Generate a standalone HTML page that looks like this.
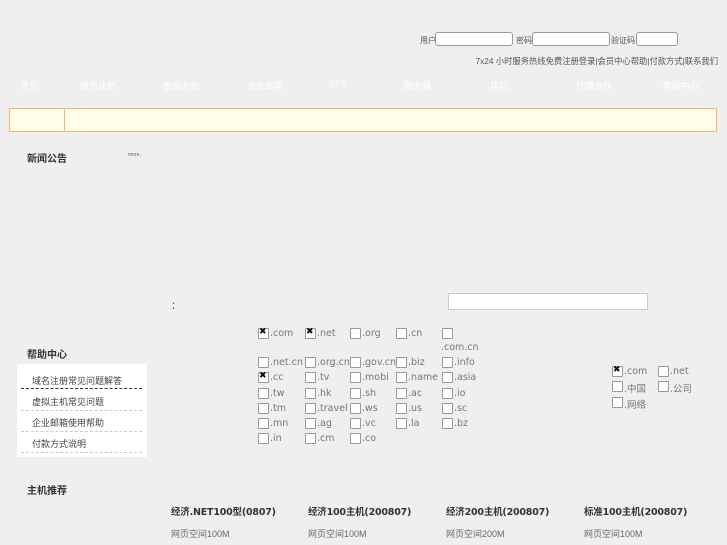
<!DOCTYPE html><html><head><meta charset="utf-8"><style>
body{margin:0;width:727px;height:545px;background:#efefef;font-family:"Liberation Sans","DejaVu Sans","Noto Sans CJK SC",sans-serif;position:relative;overflow:hidden;color:#444}
.a{position:absolute;white-space:nowrap}
.s{font-size:8px;color:#555}
input.t{position:absolute;height:12px;border:1px solid #999;border-radius:3px;background:#fff;padding:0;margin:0}
.nav{color:#fff;font-size:9px}
.cb{position:absolute;width:9px;height:9px;border:1px solid #999;background:#fff;border-radius:1px}
.cb.x::after{content:"✖";position:absolute;left:0;top:-3px;font-size:9px;color:#111}
.lb{position:absolute;font-size:9.5px;color:#777;font-family:"DejaVu Sans","Noto Sans CJK SC",sans-serif}
.h{font-size:10px;font-weight:bold;color:#333}
.p{font-size:9.5px;font-weight:bold;color:#333;font-family:'DejaVu Sans','Noto Sans CJK SC',sans-serif;letter-spacing:-0.2px}
</style></head><body>
<div class="a s" style="left:420px;top:35px">用户:</div><input class="t" style="left:435px;top:32px;width:76px">
<div class="a s" style="left:516px;top:35px">密码:</div><input class="t" style="left:532px;top:32px;width:76px">
<div class="a s" style="left:611px;top:35px">验证码:</div><input class="t" style="left:636px;top:32px;width:40px">
<div class="a s" style="right:9px;top:55px;font-size:8.3px">7x24 小时服务热线免费注册登录|会员中心帮助|付款方式|联系我们</div>
<div class="a nav" style="left:20px;top:79px">首页</div>
<div class="a nav" style="left:80px;top:79px">域名注册</div>
<div class="a nav" style="left:163px;top:79px">虚拟主机</div>
<div class="a nav" style="left:247px;top:79px">企业邮箱</div>
<div class="a nav" style="left:329px;top:79px">VPS</div>
<div class="a nav" style="left:404px;top:79px">服务器</div>
<div class="a nav" style="left:490px;top:79px">建站</div>
<div class="a nav" style="left:576px;top:79px">代理合作</div>
<div class="a nav" style="left:663px;top:79px">客服中心</div>
<div class="a" style="left:9px;top:108px;width:706px;height:22px;border:1px solid #f8b56a;background:#fffeea"></div>
<div class="a" style="left:64px;top:108px;width:1px;height:24px;background:#f8b56a"></div>
<div class="a h" style="left:27px;top:150px">新闻公告</div>
<div class="a" style="left:128px;top:152px;font-size:5px;color:#666">more..</div>
<div class="a" style="left:171px;top:297px;font-size:10px">：</div>
<div class="a" style="left:448px;top:293px;width:198px;height:15px;border:1px solid #ccc;background:#fff"></div>
<div class="a h" style="left:27px;top:346px">帮助中心</div>
<div class="a" style="left:17px;top:364px;width:130px;height:93px;background:#fff"></div>
<div class="a" style="left:32px;top:374px;font-size:9px;color:#444">域名注册常见问题解答</div>
<div class="a" style="left:21px;top:388px;width:121px;border-top:1px dashed #333"></div>
<div class="a" style="left:32px;top:395px;font-size:9px;color:#444">虚拟主机常见问题</div>
<div class="a" style="left:21px;top:410px;width:121px;border-top:1px dashed #ccc"></div>
<div class="a" style="left:32px;top:416px;font-size:9px;color:#444">企业邮箱使用帮助</div>
<div class="a" style="left:21px;top:431px;width:121px;border-top:1px dashed #ccc"></div>
<div class="a" style="left:32px;top:437px;font-size:9px;color:#444">付款方式说明</div>
<div class="a" style="left:21px;top:452px;width:121px;border-top:1px dashed #ccc"></div>
<div class="a h" style="left:27px;top:482px">主机推荐</div>
<div class="a p" style="left:171px;top:504px">经济.NET100型(0807)</div>
<div class="a p" style="left:308px;top:504px">经济100主机(200807)</div>
<div class="a p" style="left:446px;top:504px">经济200主机(200807)</div>
<div class="a p" style="left:584px;top:504px">标准100主机(200807)</div>
<div class="a" style="left:171px;top:527px;font-size:9px;color:#666">网页空间100M</div>
<div class="a" style="left:308px;top:527px;font-size:9px;color:#666">网页空间100M</div>
<div class="a" style="left:446px;top:527px;font-size:9px;color:#666">网页空间200M</div>
<div class="a" style="left:584px;top:527px;font-size:9px;color:#666">网页空间100M</div>
<div id="g"></div>
<script>
var cols=[258,305,350,396,442];
var rows=[
[['.com',1],['.net',1],['.org'],['.cn'],['']],
[['.net.cn'],['.org.cn'],['.gov.cn'],['.biz'],['.info']],
[['.cc',1],['.tv'],['.mobi'],['.name'],['.asia']],
[['.tw'],['.hk'],['.sh'],['.ac'],['.io']],
[['.tm'],['.travel'],['.ws'],['.us'],['.sc']],
[['.mn'],['.ag'],['.vc'],['.la'],['.bz']],
[['.in'],['.cm'],['.co']]];
var ys=[328,357,372,388,403,418,433];
var h='';
function lab(x,y,t){return '<div class="lb" style="left:'+(x+12)+'px;top:'+(y)+'px">'+t+'</div>';}
rows.forEach(function(r,i){r.forEach(function(c,j){var x=cols[j],y=ys[i];
h+='<div class="cb'+(c[1]?' x':'')+'" style="left:'+x+'px;top:'+y+'px"></div>'+lab(x,y,c[0]);});});
h+='<div class="lb" style="left:441px;top:342px">.com.cn</div>';
var rr=[[612,366,'.com',1],[658,366,'.net'],[612,381,'.中国'],[658,381,'.公司'],[612,397,'.网络']];
rr.forEach(function(c){h+='<div class="cb'+(c[3]?' x':'')+'" style="left:'+c[0]+'px;top:'+c[1]+'px"></div>'+lab(c[0],c[1],c[2]);});
document.getElementById('g').innerHTML=h;
</script>
</body></html>
